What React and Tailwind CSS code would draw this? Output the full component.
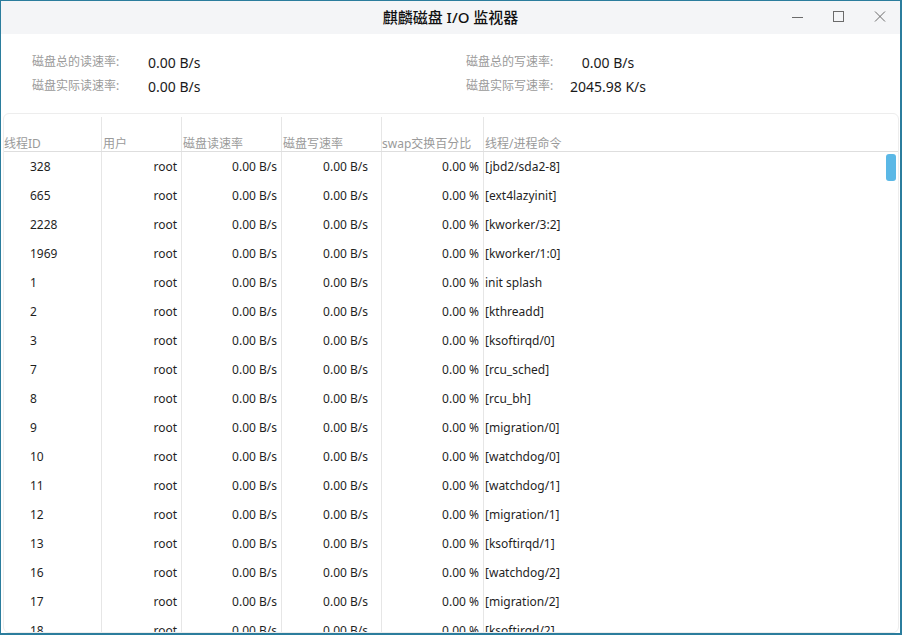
const rows = [
  ["328", "[jbd2/sda2-8]"],
  ["665", "[ext4lazyinit]"],
  ["2228", "[kworker/3:2]"],
  ["1969", "[kworker/1:0]"],
  ["1", "init splash"],
  ["2", "[kthreadd]"],
  ["3", "[ksoftirqd/0]"],
  ["7", "[rcu_sched]"],
  ["8", "[rcu_bh]"],
  ["9", "[migration/0]"],
  ["10", "[watchdog/0]"],
  ["11", "[watchdog/1]"],
  ["12", "[migration/1]"],
  ["13", "[ksoftirqd/1]"],
  ["16", "[watchdog/2]"],
  ["17", "[migration/2]"],
  ["18", "[ksoftirqd/2]"],
];

const font = { fontFamily: '"Noto Sans", "Noto Sans CJK SC", sans-serif' };

function Stat({ label, value, right }) {
  return (
    <div className="flex h-6 items-center">
      <span className={`text-[12px] text-[#9a9a9a] ${right ? "w-[94px]" : "w-[116px]"}`}>{label}</span>
      <span className={`text-[14px] text-[#1a1a1a] ${right ? "w-[96px] text-center" : ""}`}>{value}</span>
    </div>
  );
}

export default function App() {
  return (
    <div
      className="w-[902px] h-[635px] bg-white border-l border-t border-r-2 border-b-2 border-[#2b7d9d] flex flex-col overflow-hidden"
      style={font}
    >
      {/* Title bar */}
      <div className="relative h-[33px] shrink-0 bg-[#f4f5f7] flex items-center justify-center">
        <span className="text-[15px] font-medium text-[#111]">麒麟磁盘 I/O 监视器</span>
        <div className="absolute right-0 top-0 h-full flex items-center">
          <svg width="41" height="33" viewBox="0 0 41 33">
            <line x1="15" y1="16.5" x2="26" y2="16.5" stroke="#6b6b6b" strokeWidth="1" />
          </svg>
          <svg width="41" height="33" viewBox="0 0 41 33">
            <rect x="15.5" y="10.5" width="10" height="10" fill="none" stroke="#6b6b6b" strokeWidth="1" />
          </svg>
          <svg width="41" height="33" viewBox="0 0 41 33">
            <path d="M16 10.5 L26 20.5 M26 10.5 L16 20.5" stroke="#6b6b6b" strokeWidth="1" />
          </svg>
        </div>
      </div>

      {/* Stats */}
      <div className="h-[79px] shrink-0 flex pt-[16px]">
        <div className="w-[465px] pl-[31px]">
          <Stat label="磁盘总的读速率:" value="0.00 B/s" />
          <Stat label="磁盘实际读速率:" value="0.00 B/s" />
        </div>
        <div>
          <Stat right label="磁盘总的写速率:" value="0.00 B/s" />
          <Stat right label="磁盘实际写速率:" value="2045.98 K/s" />
        </div>
      </div>

      {/* Table */}
      <div className="relative flex-1 ml-[2px] mr-[1px] border border-[#ededed] rounded-md overflow-hidden">
        <div className="flex h-[38px] border-b border-[#dedede] text-[12px] text-[#9a9a9a]">
          <div className="w-[98px] pt-[3px] flex"><div className="flex-1 border-r border-[#e6e6e6] pt-[19px] leading-[16px]">线程ID</div></div>
          <div className="w-[80px] pt-[3px] flex"><div className="flex-1 border-r border-[#e6e6e6] pt-[19px] leading-[16px] pl-[1px]">用户</div></div>
          <div className="w-[100px] pt-[3px] flex"><div className="flex-1 border-r border-[#e6e6e6] pt-[19px] leading-[16px] pl-[1px]">磁盘读速率</div></div>
          <div className="w-[100px] pt-[3px] flex"><div className="flex-1 border-r border-[#e6e6e6] pt-[19px] leading-[16px] pl-[1px]">磁盘写速率</div></div>
          <div className="w-[102px] pt-[3px] flex"><div className="flex-1 border-r border-[#e6e6e6] pt-[19px] leading-[16px]">swap交换百分比</div></div>
          <div className="flex-1 pt-[22px] leading-[16px] pl-[1px]">线程/进程命令</div>
        </div>
        {rows.map(([id, cmd]) => (
          <div key={id} className="flex h-[29px] items-stretch text-[12px] text-[#1f1f1f]">
            <div className="w-[98px] border-r border-[#e6e6e6] flex items-center pl-[26px]">{id}</div>
            <div className="w-[80px] border-r border-[#e6e6e6] flex items-center justify-end pr-[4px]">root</div>
            <div className="w-[100px] border-r border-[#e6e6e6] flex items-center justify-end pr-[4px]">0.00 B/s</div>
            <div className="w-[100px] border-r border-[#e6e6e6] flex items-center justify-end pr-[13px]">0.00 B/s</div>
            <div className="w-[102px] border-r border-[#e6e6e6] flex items-center justify-end pr-[4px]">0.00 %</div>
            <div className="flex-1 flex items-center pl-[1px]">{cmd}</div>
          </div>
        ))}
        {/* scrollbar thumb */}
        <div className="absolute right-[2px] top-[40px] w-[10px] h-[27px] rounded-[3px] bg-[#5bb8e6]" />
      </div>
    </div>
  );
}
